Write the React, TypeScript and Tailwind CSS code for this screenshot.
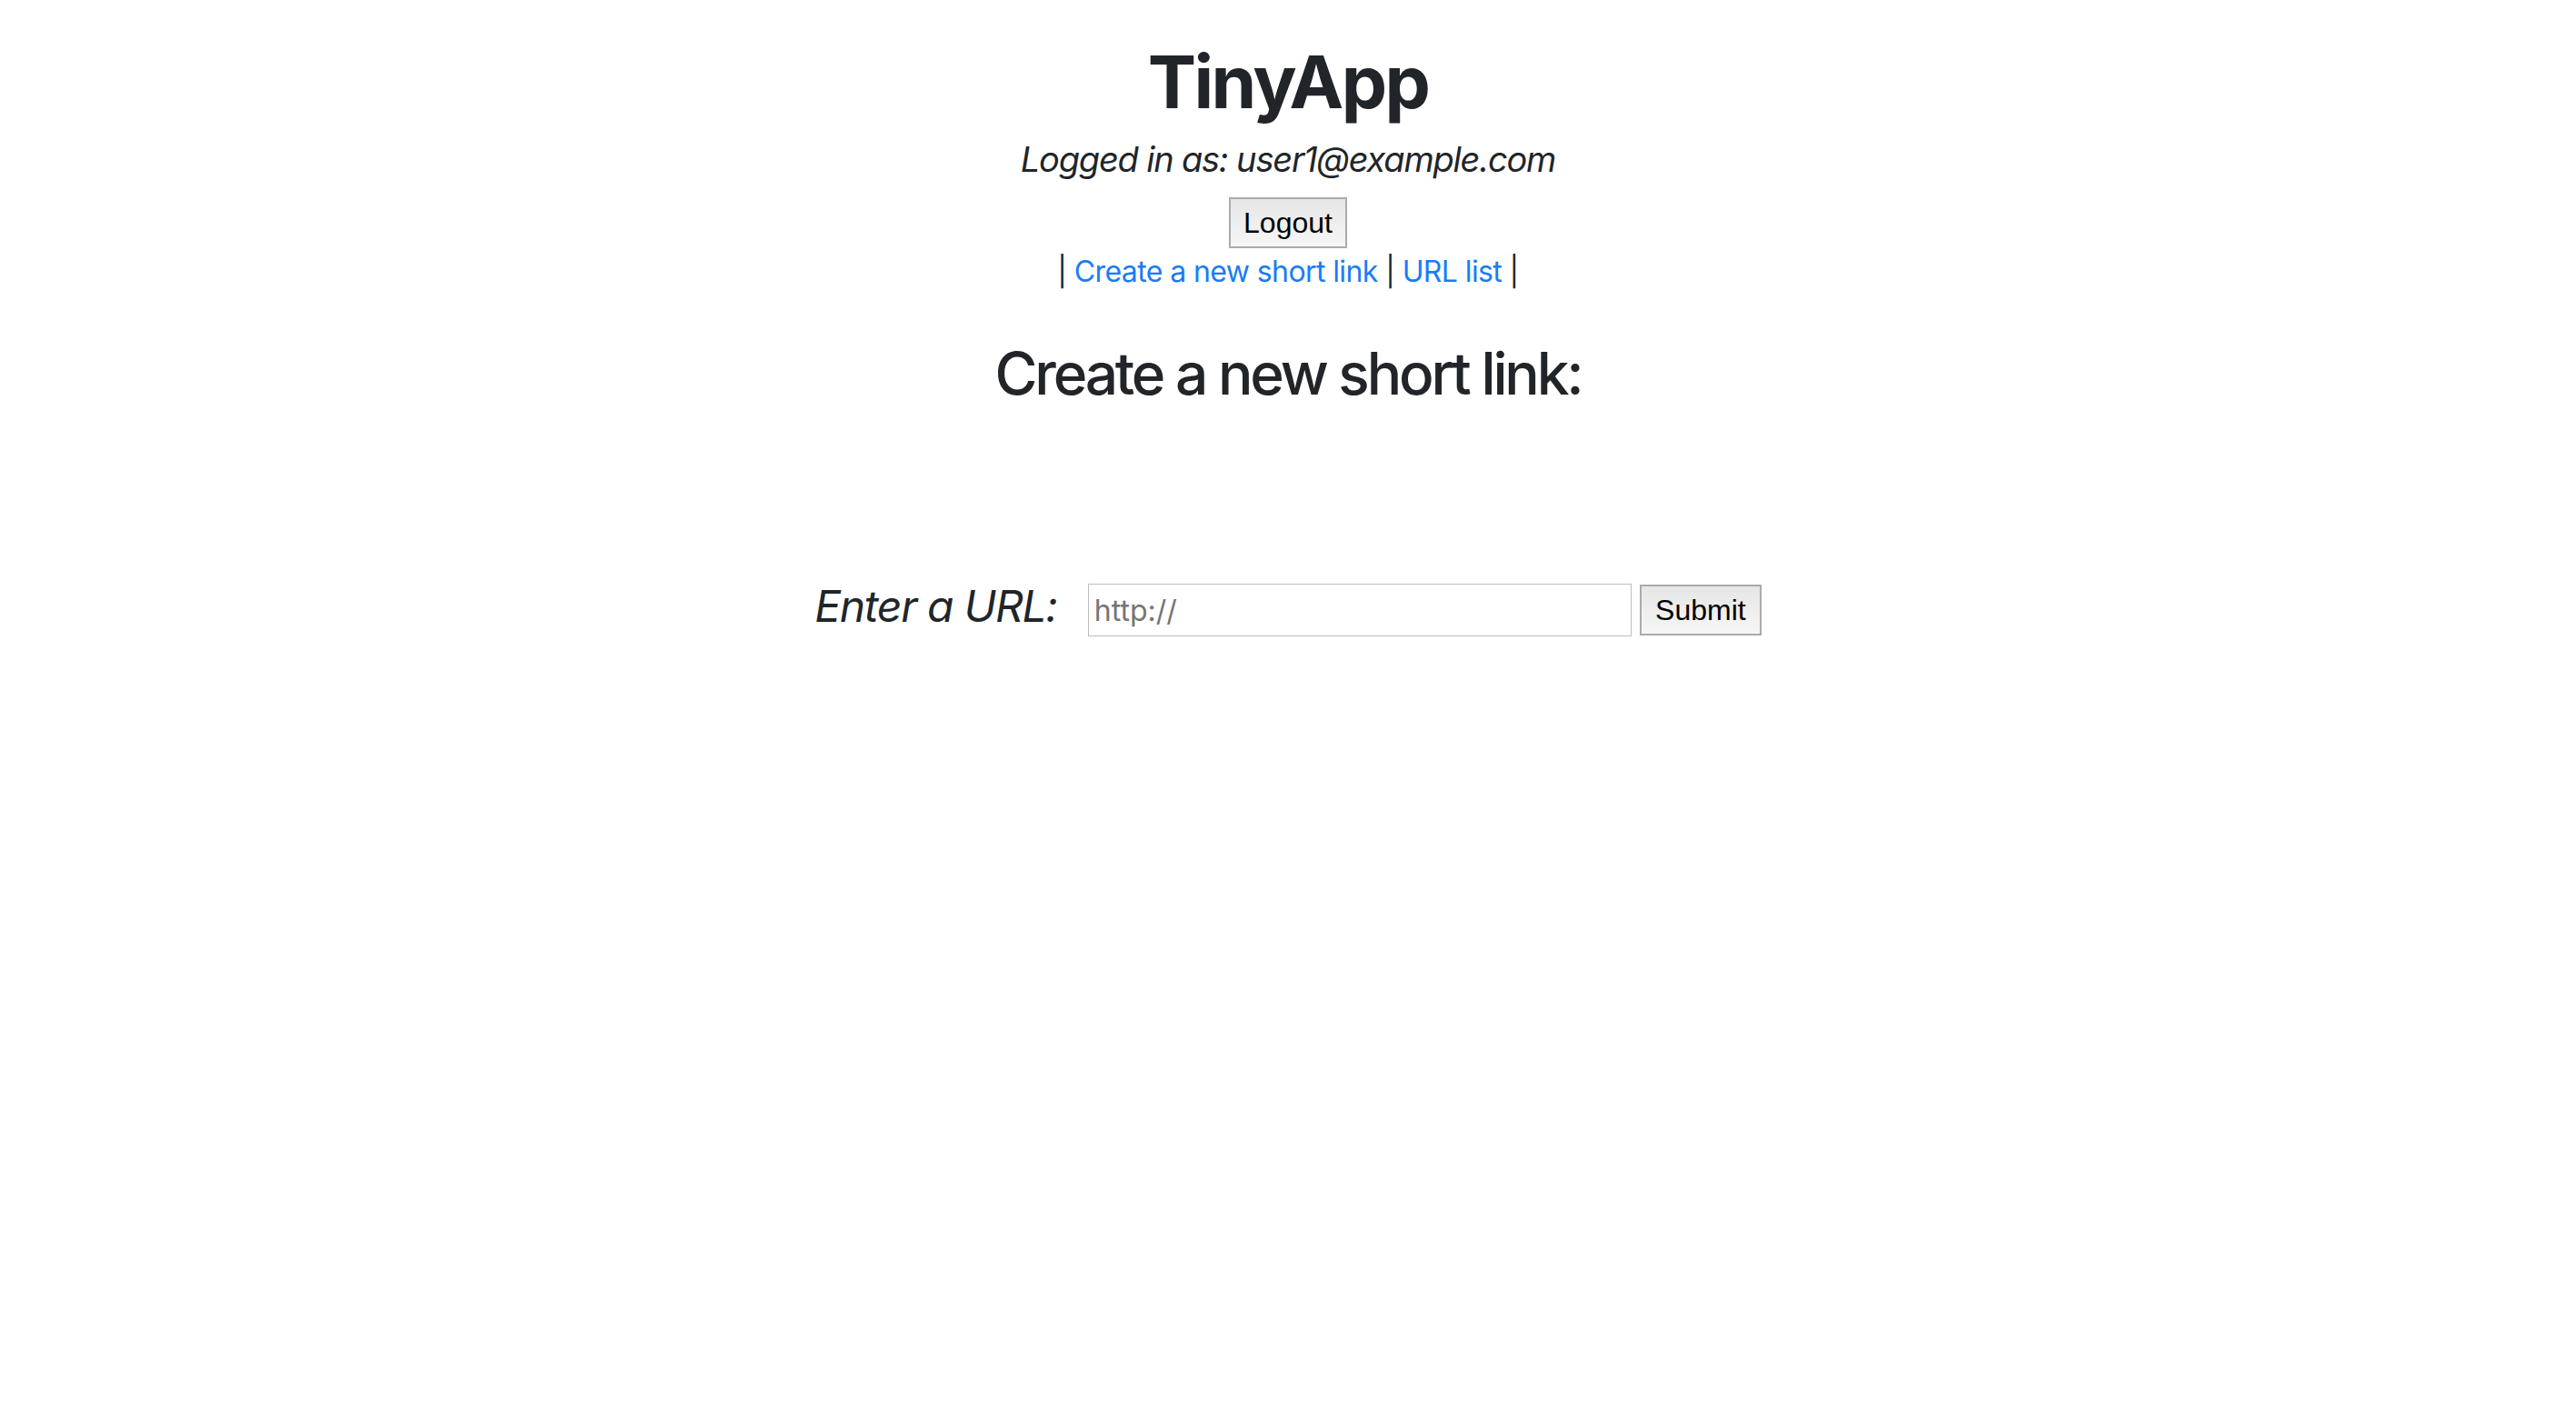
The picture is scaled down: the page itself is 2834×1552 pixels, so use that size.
const App = () => {
  return (
    <div className="min-h-screen bg-white font-['Inter',sans-serif] text-[#212529]">
      <header className="flex flex-col items-center pt-[42px]">
        <h1 className="text-[80px] font-bold leading-[96px] tracking-[-2.6px]">
          TinyApp
        </h1>
        <p className="mt-[14px] text-[38px] italic leading-[46px] tracking-[-1.2px]">
          Logged in as: user1@example.com
        </p>
        <button className="mt-[19px] h-[56px] w-[130px] border-2 border-[#ababab] bg-gradient-to-b from-[#e6e6e6] to-[#f6f6f6] font-['Liberation_Sans',sans-serif] text-[32px] text-black">
          Logout
        </button>
        <div className="mt-[2px] text-[32px] leading-[48px] tracking-[-0.6px]">
          |{" "}
          <a href="#" className="text-[#1a7cf5]">
            Create a new short link
          </a>{" "}
          |{" "}
          <a href="#" className="text-[#1a7cf5]">
            URL list
          </a>{" "}
          |
        </div>
      </header>
      <main className="flex flex-col items-center">
        <h2 className="mt-[49px] text-[64px] font-medium leading-[77px] tracking-[-3.2px]">
          Create a new short link:
        </h2>
        <form
          className="mt-[189px] flex items-center"
          onSubmit={(e) => e.preventDefault()}
        >
          <label className="mb-[8px] mr-[34px] text-[48px] italic leading-[58px] tracking-[-1.3px]">
            Enter a URL:
          </label>
          <input
            type="text"
            placeholder="http://"
            className="h-[58px] w-[598px] border border-[#bdbdbd] bg-white px-[6px] font-['Inter',sans-serif] text-[32px] text-black placeholder:text-[#757575] outline-none"
          />
          <button
            type="submit"
            className="ml-[9px] h-[56px] w-[134px] border-2 border-[#ababab] bg-gradient-to-b from-[#e6e6e6] to-[#f6f6f6] font-['Liberation_Sans',sans-serif] text-[32px] text-black"
          >
            Submit
          </button>
        </form>
      </main>
    </div>
  );
};

export default App;
